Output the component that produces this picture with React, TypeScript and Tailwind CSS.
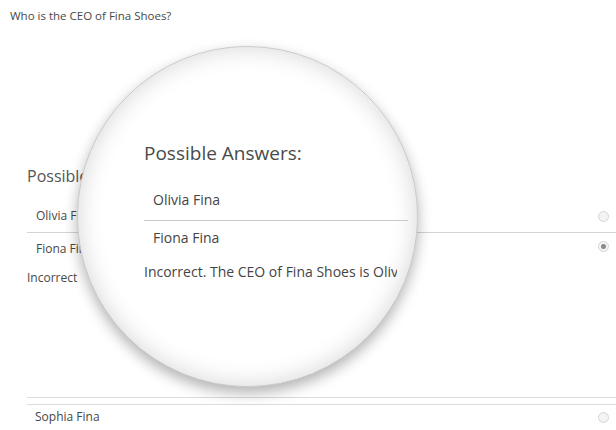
import React from "react";

function Radio({ checked, className = "" }: { checked?: boolean; className?: string }) {
  return (
    <span
      className={`flex h-[11px] w-[11px] items-center justify-center rounded-full border border-[#d6d6d6] bg-[#f3f3f3] ${className}`}
    >
      {checked && <span className="h-[5px] w-[5px] rounded-full bg-[#8a8a8a]" />}
    </span>
  );
}

export default function App() {
  return (
    <div
      className="relative h-[430px] w-[616px] overflow-hidden bg-white text-[#474747]"
      style={{ fontFamily: '"Open Sans", sans-serif' }}
    >
      <div className="pl-[10px] pt-[9px] text-[11.5px] leading-[14px]">Who is the CEO of Fina Shoes?</div>

      <div className="mt-[143px] pl-[27px] text-[16px] leading-[20px] text-[#555]">Possible Answers:</div>

      <div className="mt-[14px] ml-[27px] flex h-[33px] items-center justify-between border-b border-[#d4d4d4] pl-[9px] pr-[7px] text-[12px]">
        <span>Olivia Fina</span>
        <Radio />
      </div>
      <div className="ml-[27px] flex h-[26px] items-start justify-between pl-[9px] pr-[7px] text-[12px]">
        <span className="pt-[8px] leading-[16px]">Fiona Fina</span>
        <Radio checked className="mt-[8px]" />
      </div>
      <div className="mt-[11px] pl-[27px] text-[12px] leading-[16px]">Incorrect</div>

      <div className="mt-[111px] ml-[27px] h-[8px] border-y border-[#dcdcdc]" />
      <div className="ml-[27px] flex h-[24px] items-center justify-between pl-[8px] pr-[7px] text-[12px]">
        <span>Sophia Fina</span>
        <Radio />
      </div>

      {/* magnifier lens */}
      <div className="absolute left-[77px] top-[46px] h-[341px] w-[341px] overflow-hidden rounded-full border border-[#c9c9c9] bg-white shadow-[0_6px_14px_rgba(0,0,0,0.3),inset_0_0_24px_rgba(0,0,0,0.17)]">
        <div className="ml-[66px] mt-[93px] w-[264px] whitespace-nowrap text-[#444]">
          <div className="text-[19px] leading-[26px] text-[#4a4a4a]">Possible Answers:</div>
          <div className="mt-[19px] h-[36px] border-b border-[#c8c8c8] pl-[9px] pt-[5px] text-[14px] leading-[20px]">
            Olivia Fina
          </div>
          <div className="pl-[9px] pt-[7px] text-[14px] leading-[20px]">Fiona Fina</div>
          <div className="mt-[14px] w-[253px] overflow-hidden text-[14px] leading-[20px]">
            Incorrect. The CEO of Fina Shoes is Olivia Fina
          </div>
        </div>
      </div>
    </div>
  );
}
